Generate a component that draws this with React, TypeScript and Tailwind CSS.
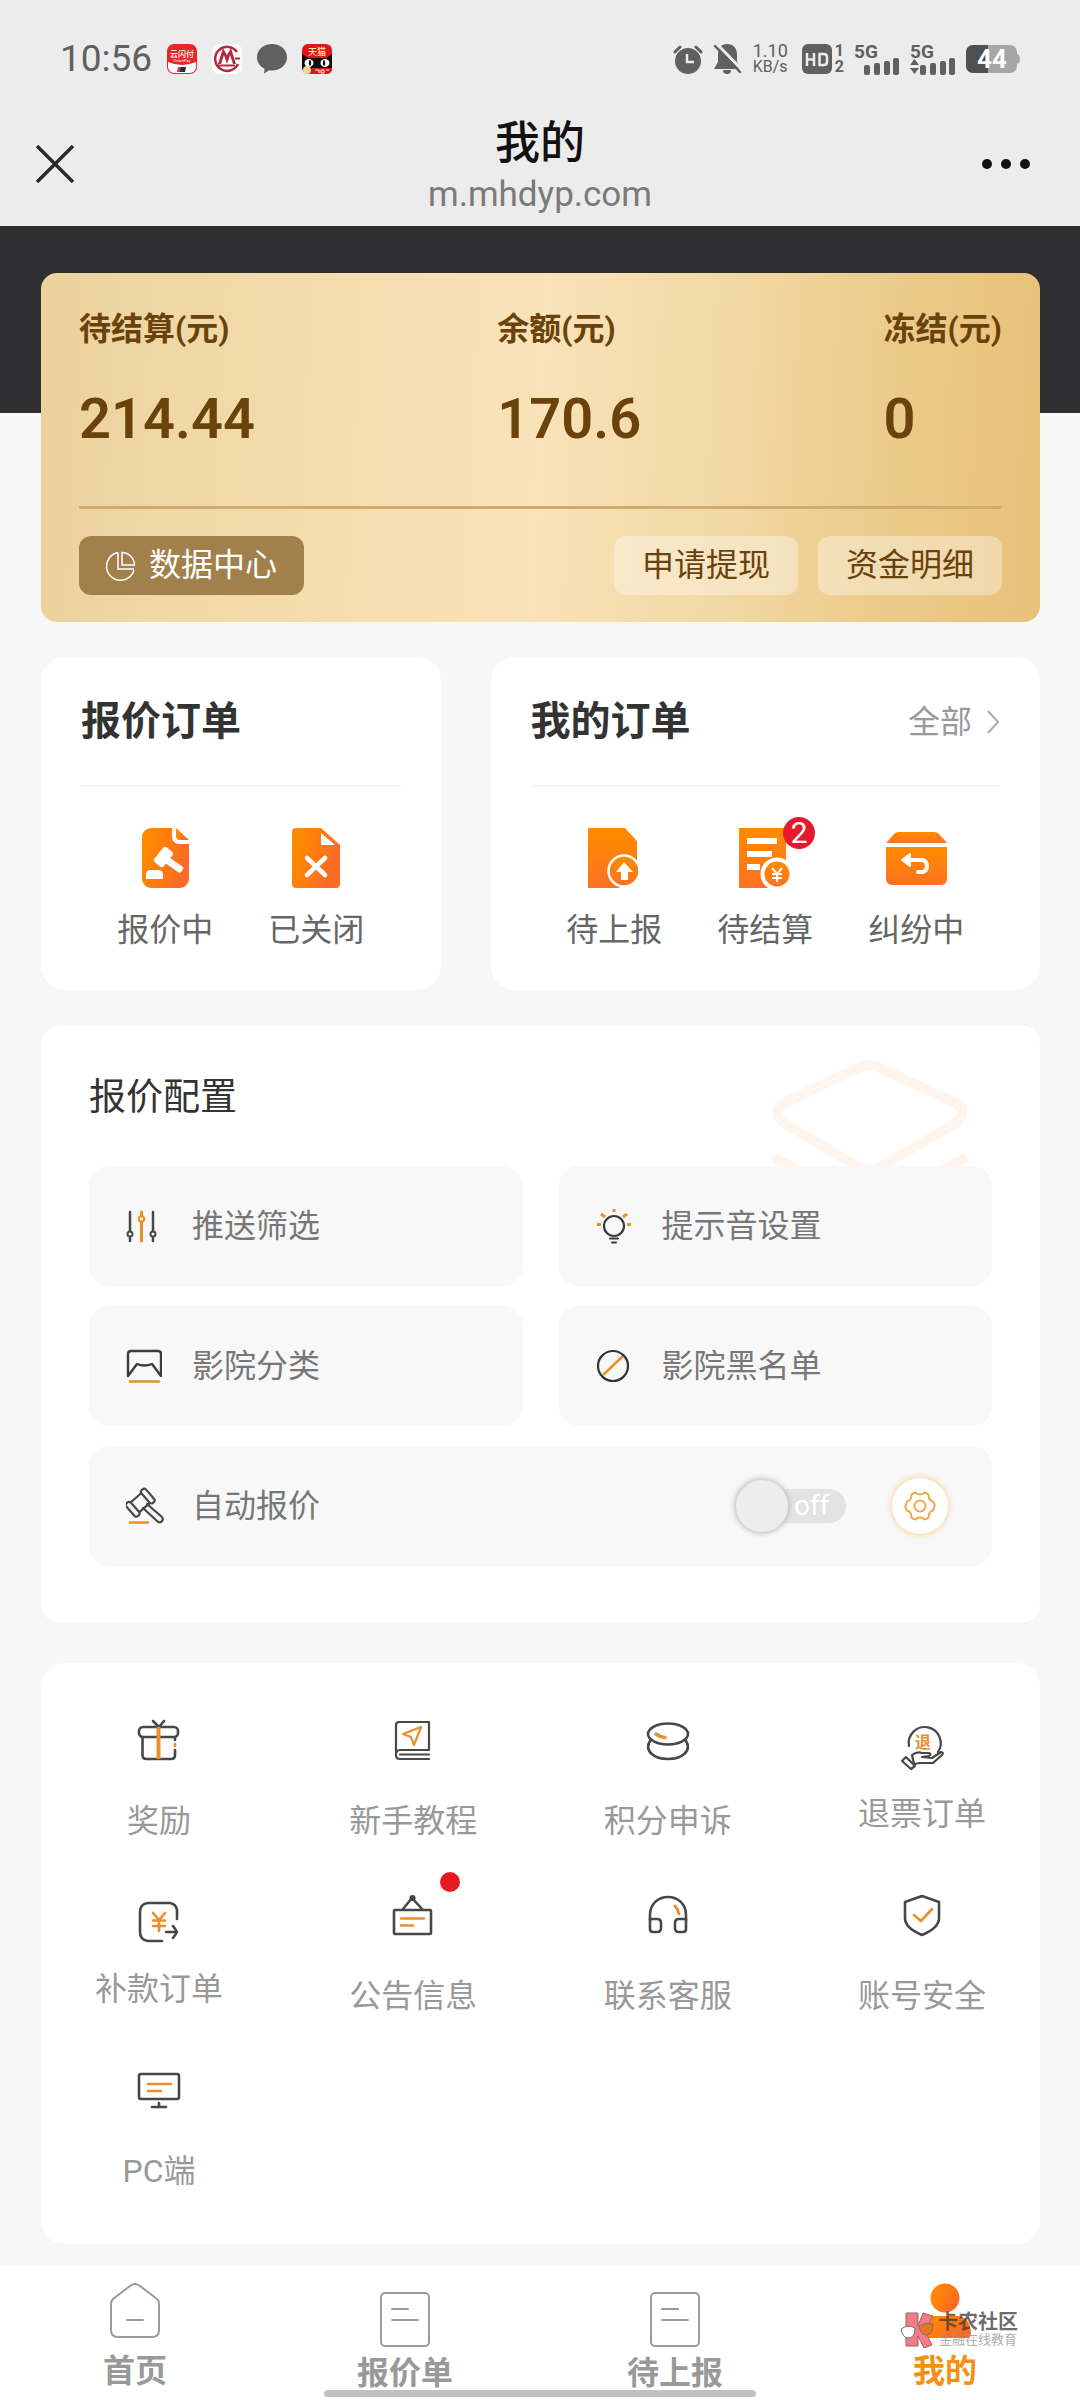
import React, { useState } from 'react';

const DARK = '#474747';
const ORANGE = '#e98f2c';

const Gradients = () => (
  <svg className="absolute h-0 w-0" aria-hidden="true">
    <defs>
      <linearGradient id="orangeX" x1="0" y1="0" x2="1" y2="0.4">
        <stop offset="0.2" stopColor="#ff8a00" />
        <stop offset="1" stopColor="#fb6a26" />
      </linearGradient>
      <linearGradient id="orangeY" x1="0" y1="0" x2="0" y2="1">
        <stop offset="0.1" stopColor="#ff8a00" />
        <stop offset="1" stopColor="#ff7024" />
      </linearGradient>
    </defs>
  </svg>
);

/* ---------- status bar ---------- */

const UnionPayIcon = () => (
  <svg width="30" height="30" viewBox="0 0 30 30">
    <rect width="30" height="30" rx="7" fill="#e8262a" />
    <path d="M1 18Q15 24 29 18V23a6 6 0 0 1-6 6H7a6 6 0 0 1-6-6Z" fill="#fff" />
    <text x="15" y="13" textAnchor="middle" fontSize="8" fontWeight="500" fill="#fff">云闪付</text>
    <text x="15" y="18" textAnchor="middle" fontSize="4" fill="#fff">UnionPay</text>
    <path d="M12 23h7l-1 5h-7z" fill="#12343f" />
    <path d="M11 23h3l-1 5h-3z" fill="#d8343a" />
  </svg>
);

const BankIcon = () => (
  <svg width="30" height="30" viewBox="0 0 30 30">
    <rect width="30" height="30" rx="7" fill="#fff" />
    <path d="M25 8A12 12 0 1 0 26 20" fill="none" stroke="#b02a43" strokeWidth="2.500" />
    <path d="M6 20 11 4l4 7 4-7 5 16h-3l-3-9-3 9-3-9-3 9Z" fill="#b02a43" />
    <path d="M6 21.500H23M23 14.500h5" stroke="#b02a43" strokeWidth="2" />
  </svg>
);

const BubbleIcon = () => (
  <svg width="30" height="30" viewBox="0 0 30 30">
    <path d="M15 0c8.500 0 15 5.800 15 13.300S23.500 26.500 15 26.500c-1 0-2 0-2.800-.3L7 29.500l.6-4.700C3 22.500 0 18.300 0 13.300 0 5.800 6.500 0 15 0Z" fill="#606060" />
  </svg>
);

const TmallIcon = () => (
  <svg width="30" height="30" viewBox="0 0 30 30">
    <rect width="30" height="30" rx="6" fill="#e0151c" />
    <path d="M0 10 6 14H24L30 10V25H0Z" fill="#0d0d0d" />
    <text x="15" y="11" textAnchor="middle" fontSize="9" fontWeight="500" fill="#ffe6a0">天猫</text>
    <ellipse cx="7" cy="19" rx="4.500" ry="4" fill="#fff" />
    <ellipse cx="23" cy="19" rx="4.500" ry="4" fill="#fff" />
    <ellipse cx="8" cy="19" rx="1.200" ry="3" fill="#0d0d0d" />
    <ellipse cx="22" cy="19" rx="1.200" ry="3" fill="#0d0d0d" />
    <path d="M10 24H30V25a5 5 0 0 1-5 5H10Z" fill="#e0151c" />
    <circle cx="5" cy="26" r="4" fill="#ffd0a0" />
    <path d="M13 26h4v3M19 26h3v3h-3zM24 26h3" stroke="#fff" fill="none" />
  </svg>
);

const AlarmIcon = () => (
  <svg width="30" height="30" viewBox="0 0 30 30">
    <circle cx="15" cy="17" r="13" fill="#606060" />
    <path d="M2 8 7 3M28 8 23 3" stroke="#606060" strokeWidth="3" strokeLinecap="round" />
    <path d="M14 10v8h7" fill="none" stroke="#ececec" strokeWidth="2.500" />
  </svg>
);

const BellOffIcon = () => (
  <svg width="30" height="30" viewBox="0 0 30 30">
    <path d="M14 0c6 0 10 4 10 10v8l4 7H1l4-7v-8C5 4 8 0 14 0ZM10 26h8a4 4 0 0 1-8 0Z" fill="#606060" />
    <path d="M4 0 30 27" stroke="#ececec" strokeWidth="3" />
    <path d="M2 2 27 28" stroke="#606060" strokeWidth="2.500" strokeLinecap="round" />
  </svg>
);

const HdIcon = () => (
  <span className="flex items-center gap-[3px] text-[16px] leading-4 font-bold">
    <svg width="30" height="30" viewBox="0 0 30 30">
      <rect width="30" height="30" rx="6" fill="#606060" />
      <path d="M5 9v13M12 9v13M5 15.500h7" stroke="#ececec" strokeWidth="2.500" fill="none" />
      <path d="M17.500 10h4q3.500 0 3.500 3v5q0 3-3.500 3h-4Z" stroke="#ececec" strokeWidth="2.500" fill="none" />
    </svg>
    <span className="flex flex-col items-center">
      <span>1</span>
      <span>2</span>
    </span>
  </span>
);

const SignalIcon = ({ arrows }: { arrows?: boolean }) => (
  <svg className="overflow-visible" width="46" height="31" viewBox="0 0 46 31">
    <text x="0" y="14" fontSize="19" fontWeight="700" fill="#606060">5G</text>
    <rect x="10" y="21" width="6" height="10" rx="2" fill="#606060" />
    <rect x="20" y="19" width="6" height="12" rx="2" fill="#606060" />
    <rect x="30" y="17" width="6" height="14" rx="2" fill="#606060" />
    <rect x="39" y="14" width="6" height="17" rx="2" fill="#606060" />
    {arrows && <path d="M0 21 4.500 15 9 21ZM0 24H9L4.500 30Z" fill="#606060" />}
  </svg>
);

const BatteryIcon = () => (
  <svg className="overflow-visible" width="54" height="28" viewBox="0 0 54 28">
    <rect width="51" height="28" rx="7" fill="#a6a6a6" />
    <path d="M51 9q3 1 3 5t-3 5Z" fill="#a6a6a6" />
    <path d="M7 0H22V28H7a7 7 0 0 1-7-7V7a7 7 0 0 1 7-7Z" fill="#505050" />
    <text x="26" y="23" textAnchor="middle" fontSize="26" fontWeight="700" fill="#fff">44</text>
  </svg>
);

/* ---------- order icons ---------- */

const BiddingIcon = () => (
  <svg width="47" height="60" viewBox="0 0 47 60">
    <path d="M9 0H30V9a7 7 0 0 0 7 7H47V51a9 9 0 0 1-9 9H9a9 9 0 0 1-9-9V9A9 9 0 0 1 9 0Z" fill="url(#orangeX)" />
    <path d="M34 0 47 12H38a4 4 0 0 1-4-4Z" fill="url(#orangeX)" />
    <g fill="#fff">
      <rect x="-6" y="-9.500" width="12" height="19" rx="2.500" transform="translate(21.500 29) rotate(38)" />
      <rect x="0" y="-3.500" width="22" height="7" rx="2" transform="translate(22 30) rotate(35)" />
      <path d="M4 51V47q0-5 5-5h7q5 0 5 5v4Z" />
    </g>
  </svg>
);

const ClosedIcon = () => (
  <svg width="48" height="60" viewBox="0 0 48 60">
    <path d="M4 0H29L48 17V56a4 4 0 0 1-4 4H4a4 4 0 0 1-4-4V4A4 4 0 0 1 4 0Z" fill="url(#orangeX)" />
    <path d="M29 5V17H43Z" fill="#fff" />
    <path d="m15 30 18 17M33 30 15 47" stroke="#fff" strokeWidth="4.500" strokeLinecap="round" />
  </svg>
);

const UploadIcon = () => (
  <svg width="52" height="60" viewBox="0 0 52 60">
    <path d="M1 0H37L49 13V60H1a1 1 0 0 1-1-1V1A1 1 0 0 1 1 0Z" fill="url(#orangeY)" />
    <path d="M30 60 40 56H52V60ZM46 34H52V60H46Z" fill="#fff" />
    <circle cx="36" cy="43" r="15.500" fill="url(#orangeY)" stroke="#fff" strokeWidth="2.500" />
    <path d="M36 34 45 44H40V52H33V44H28Z" fill="#fff" />
  </svg>
);

const SettleIcon = () => (
  <svg width="52" height="60" viewBox="0 0 52 60">
    <path d="M1 0H47V60H1a1 1 0 0 1-1-1V1A1 1 0 0 1 1 0Z" fill="url(#orangeY)" />
    <path d="M8 13H38M8 26H33M8 39H21" stroke="#fff" strokeWidth="6" />
    <path d="M29 60H52V42H44Z" fill="#fff" />
    <circle cx="38" cy="46" r="14.500" fill="url(#orangeY)" stroke="#fff" strokeWidth="4" />
    <path d="m33 40 5 6 5-6M38 46V54M33 46H43M33 50H43" stroke="#fff" strokeWidth="2" fill="none" />
  </svg>
);

const DisputeIcon = () => (
  <svg width="61" height="60" viewBox="0 0 61 60">
    <path d="M0 15 8 6Q10 4 13 4H48Q51 4 53 6L61 15Z" fill="url(#orangeY)" />
    <path d="M0 19H61V51a6 6 0 0 1-6 6H6a6 6 0 0 1-6-6Z" fill="url(#orangeY)" />
    <path d="M21 32H37a6.500 6.500 0 0 1 0 12H32" fill="none" stroke="#fff" strokeWidth="4" strokeLinecap="round" />
    <path d="M24 26 16 32 24 38Z" fill="#fff" stroke="#fff" strokeWidth="2" strokeLinejoin="round" />
  </svg>
);

/* ---------- config icons ---------- */

const FilterIcon = () => (
  <svg width="36" height="36" viewBox="0 0 36 36" fill="none" strokeWidth="2.500" strokeLinecap="round">
    <path d="M4 4V23M4 30V33M27 4V23M27 30V33" stroke={DARK} />
    <circle cx="4" cy="26" r="2.500" stroke={DARK} strokeWidth="2" />
    <circle cx="27" cy="26" r="2.500" stroke={DARK} strokeWidth="2" />
    <path d="M15.500 4V8M15.500 14V33" stroke={ORANGE} strokeWidth="3" />
    <circle cx="15.500" cy="11" r="2.800" stroke={ORANGE} strokeWidth="2" />
  </svg>
);

const BulbIcon = () => (
  <svg width="36" height="36" viewBox="0 0 36 36" fill="none" strokeWidth="2.500">
    <circle cx="18" cy="18" r="10" stroke="#3a3a3a" strokeWidth="2.200" />
    <path d="M14 30.500H22M16 34.500H20" stroke="#3a3a3a" strokeWidth="2" strokeLinecap="round" />
    <path d="M18 1V4M5 6 9 9M31 6 27 9M1 16.500H5M31 16.500H35" stroke={ORANGE} strokeWidth="3" />
  </svg>
);

const CinemaIcon = () => (
  <svg width="36" height="36" viewBox="0 0 36 36" fill="none" strokeWidth="2.400" strokeLinejoin="round" strokeLinecap="round">
    <path d="M2 28V6Q2 3 5 3H32Q35 3 35 6V28L26 16Q18.500 19 11 16Z" stroke="#3c3c3c" />
    <path d="M4 33.500H33" stroke={ORANGE} strokeWidth="2.500" />
  </svg>
);

const BlockIcon = () => (
  <svg width="36" height="36" viewBox="0 0 36 36" fill="none" strokeWidth="2.200">
    <path d="M7 27 27 8" stroke={ORANGE} strokeWidth="2.500" />
    <circle cx="17" cy="18" r="15" stroke="#333" />
  </svg>
);

const GavelIcon = () => (
  <svg width="38" height="38" viewBox="0 0 38 38" fill="none" strokeWidth="2.200" strokeLinejoin="round" stroke={DARK}>
    <g transform="translate(15 15) rotate(-41)">
      <rect x="-9" y="-6.500" width="16" height="13" />
      <rect x="-14" y="-8.500" width="6" height="17" rx="2.500" fill="#f8f8f8" />
      <rect x="6" y="-8.500" width="6" height="17" rx="2.500" fill="#f8f8f8" />
    </g>
    <path d="m21 17 15 13q2 3-1 5-2 1-4-1L17 21" strokeLinecap="round" />
    <path d="M4 35.500H22" stroke={ORANGE} strokeWidth="2.500" strokeLinecap="round" />
  </svg>
);

const GearIcon = () => (
  <svg width="32" height="32" viewBox="0 0 32 32" fill="none" stroke="#efa84a" strokeWidth="2" strokeLinejoin="round">
    <path d="M11.500 2.500Q13 4.500 16 4.500T20.500 2.500Q24 3 24.800 5.500 24.500 8 25.800 9.500T29 11.500Q31 14 30.500 16T29 20.500Q27 21 25.800 22.500T24.800 26.500Q24 29 20.500 29.500 19 27.500 16 27.500T11.500 29.500Q8 29 7.200 26.500 7.500 24 6.200 22.500T3 20.500Q1 18 1.500 16T3 11.500Q5 11 6.200 9.500T7.200 5.500Q8 3 11.500 2.500Z" />
    <circle cx="16" cy="16" r="5.500" />
  </svg>
);

/* ---------- tool icons ---------- */

const toolProps = {
  width: 44,
  height: 44,
  viewBox: '0 0 44 44',
  fill: 'none',
  stroke: DARK,
  strokeWidth: 2.6,
  strokeLinecap: 'round' as const,
  strokeLinejoin: 'round' as const,
};

const GiftIcon = () => (
  <svg {...toolProps}>
    <rect x="2" y="8" width="39" height="10" rx="4" />
    <path d="M5.500 18V36q0 4 4 4H34q4 0 4-4V31M38 18v3M16 2l6 6 5-6" />
    <path d="M38 25v2" stroke={ORANGE} />
    <path d="M21.500 8V40" stroke={ORANGE} strokeWidth="4" strokeLinecap="butt" />
  </svg>
);

const BookIcon = () => (
  <svg {...toolProps} strokeWidth="2.200">
    <path d="M38 31V3H8Q5 3 5 6V36Q5 40 9 40H38M38 31H9Q5 31 5 36M9 35.500H38" />
    <path d="M30 8 23 26 20 18 12 15Z" stroke={ORANGE} />
  </svg>
);

const CoinsIcon = () => (
  <svg {...toolProps}>
    <ellipse cx="22" cy="15" rx="20" ry="10.500" />
    <path d="M4 22C-2 32 8 40 22 40S46 32 40 22" />
    <path d="M10 15q4 3 9 3.500" stroke={ORANGE} strokeWidth="3.500" />
  </svg>
);

const RefundIcon = () => (
  <svg {...toolProps} className="overflow-visible" strokeWidth="2.200">
    <path d="M9 20A16 16 0 1 1 38 26" />
    <path d="M12 29q5-4 10-2h7q3 1 0 3l-7 1 10 1 9-6q3 0 1 3L33 37H20l-6 1Z" />
    <path d="m6 31 9 9-4 3-9-8Z" />
    <text x="23" y="22" textAnchor="middle" fontSize="16" fontWeight="700" fill={ORANGE} stroke="none">退</text>
  </svg>
);

const PayIcon = () => (
  <svg {...toolProps}>
    <path d="M40 18V9q-1-6-7-7H11Q3 3 3 11V31q0 8 8 9H25" />
    <path d="M29 31H40M36 25q3 4 4 6-1 2-4 6" />
    <path d="m16 12 6 7 6-7M22 19V30M16 19.500H28M16 25H28" stroke={ORANGE} />
  </svg>
);

const NoticeIcon = () => (
  <svg {...toolProps}>
    <rect x="3" y="16" width="37" height="24" rx="1" />
    <path d="m12 15 9-11 10 11" />
    <circle cx="21.500" cy="4" r="1.800" fill={DARK} />
    <path d="M10 24.500H33M10 31.500H22" stroke={ORANGE} strokeWidth="2.500" />
  </svg>
);

const HeadsetIcon = () => (
  <svg {...toolProps}>
    <path d="M4 26V21C4 10 12 3 22 3S40 10 40 21V26" />
    <path d="M4 25H11q4 0 4 4v5q0 4-4 4H7q-3 0-3-3ZM40 25H33q-4 0-4 4v5q0 4 4 4h4q3 0 3-3Z" />
    <path d="M29 12q3 3 4 8" stroke={ORANGE} strokeWidth="3" />
  </svg>
);

const ShieldIcon = () => (
  <svg {...toolProps}>
    <path d="M22 2 39 8V24Q39 34 22 41 5 34 5 24V8Z" />
    <path d="m14 21 7 6 11-12" stroke={ORANGE} />
  </svg>
);

const MonitorIcon = () => (
  <svg {...toolProps}>
    <rect x="2" y="5" width="40" height="25" rx="2" />
    <path d="M15 38H29M22 34V38" />
    <path d="M11 15H34M11 22H24" stroke={ORANGE} strokeWidth="2.500" />
  </svg>
);

/* ---------- tab bar icons ---------- */

const HomeIcon = () => (
  <svg width="50" height="56" viewBox="0 0 50 56" fill="none" stroke="#9a9a9a" strokeWidth="2">
    <path d="M20 3q5-4 10 0L47 16q2 2 2 5V47q0 7-7 7H8q-7 0-7-7V21q0-3 2-5Z" />
    <path d="M17 37H33" strokeLinecap="round" />
  </svg>
);

const ListIcon = () => (
  <svg width="50" height="56" viewBox="0 0 50 56" fill="none" stroke="#9a9a9a" strokeWidth="2">
    <rect x="1" y="2" width="48" height="53" rx="4" />
    <path d="M12 18H28M12 29H38" strokeLinecap="round" />
  </svg>
);

const MineIcon = () => (
  <svg width="54" height="56" viewBox="0 0 54 56">
    <circle cx="27" cy="15" r="14.500" fill="url(#orangeX)" />
    <path d="M14 33H40Q52 34 53 50q0 5-4 5H5q-4 0-4-5Q2 34 14 33Z" fill="url(#orangeX)" />
  </svg>
);

const Watermark = () => (
  <div className="pointer-events-none absolute top-[47px] left-[90px] flex items-center gap-1">
    <svg width="34" height="36" viewBox="0 0 34 36" stroke="#8a6a6a">
      <path d="M6 1H18V14L23 1 33 4 25 19 32 33 24 36 18 24V34H6Z" fill="#f27c88" />
      <path d="M1 17Q8 12 15 16 15 26 8 26 2 25 1 17Z" fill="#fff" />
      <path d="M19 14Q26 10 33 12 33 23 26 23 20 22 19 14Z" fill="#e07a1c" />
    </svg>
    <span className="flex flex-col whitespace-nowrap">
      <span className="text-[20px] leading-[20px] font-bold text-[#3c3c3c]/75">卡农社区</span>
      <span className="text-[13px] leading-[16px] text-[#8f8f8f]/75">金融在线教育</span>
    </span>
  </div>
);

const balances = [
  { label: '待结算(元)', value: '214.44' },
  { label: '余额(元)', value: '170.6' },
  { label: '冻结(元)', value: '0' },
];

const quoteOrders = [
  { label: '报价中', Icon: BiddingIcon },
  { label: '已关闭', Icon: ClosedIcon },
];

const myOrders = [
  { label: '待上报', Icon: UploadIcon },
  { label: '待结算', Icon: SettleIcon, badge: 2 },
  { label: '纠纷中', Icon: DisputeIcon },
];

const configs = [
  { label: '推送筛选', Icon: FilterIcon },
  { label: '提示音设置', Icon: BulbIcon },
  { label: '影院分类', Icon: CinemaIcon },
  { label: '影院黑名单', Icon: BlockIcon },
];

const tools = [
  { label: '奖励', Icon: GiftIcon },
  { label: '新手教程', Icon: BookIcon },
  { label: '积分申诉', Icon: CoinsIcon },
  { label: '退票订单', Icon: RefundIcon, compact: true },
  { label: '补款订单', Icon: PayIcon, compact: true },
  { label: '公告信息', Icon: NoticeIcon, dot: true },
  { label: '联系客服', Icon: HeadsetIcon },
  { label: '账号安全', Icon: ShieldIcon },
  { label: 'PC端', Icon: MonitorIcon },
];

type Order = { label: string; Icon: React.FC; badge?: number };

const OrderRow = ({ items }: { items: Order[] }) => (
  <div className="flex justify-center pt-[41px]">
    {items.map(({ label, Icon, badge }) => (
      <button key={label} className="flex w-[151px] flex-col items-center gap-[18px]">
        <span className="relative">
          <Icon />
          {badge && (
            <span className="absolute -top-[11px] left-[44px] flex h-8 w-8 items-center justify-center rounded-full bg-[#e6192c] text-[30px] leading-8 text-white">
              {badge}
            </span>
          )}
        </span>
        <span className="text-[32px] leading-[48px] text-[#666]">{label}</span>
      </button>
    ))}
  </div>
);

function App() {
  const [autoQuote, setAutoQuote] = useState(false);
  const [activeTab, setActiveTab] = useState('我的');

  const tabs = [
    { label: '首页', icon: <HomeIcon />, offset: 'pt-[18px]' },
    { label: '报价单', icon: <ListIcon />, offset: 'pt-[26px]' },
    { label: '待上报', icon: <ListIcon />, offset: 'pt-[26px]' },
    { label: '我的', icon: <MineIcon />, offset: 'pt-[18px]' },
  ];

  return (
    <div className="flex min-h-screen flex-col bg-[#f7f7f7] font-['Roboto','Noto_Sans_CJK_SC',sans-serif]">
      <Gradients />

      <header className="bg-[#ececec] pb-[10px]">
        <div className="flex items-center justify-between pt-[43px] pr-[60px] pl-[60px] text-[#606060]">
          <div className="flex items-center gap-[15px]">
            <span className="text-[37px] leading-8">10:56</span>
            <UnionPayIcon />
            <BankIcon />
            <BubbleIcon />
            <TmallIcon />
          </div>
          <div className="flex items-center">
            <div className="flex items-center gap-[10px]">
              <AlarmIcon />
              <BellOffIcon />
            </div>
            <div className="ml-[10px] flex flex-col text-[18px] leading-[16px]">
              <span>1.10</span>
              <span className="text-[16px]">KB/s</span>
            </div>
            <div className="ml-[14px] flex items-center gap-[10px]">
              <HdIcon />
              <SignalIcon />
              <SignalIcon arrows />
              <BatteryIcon />
            </div>
          </div>
        </div>

        <div className="flex items-center justify-between pt-[36px] pr-[50px] pl-9">
          <button aria-label="关闭" className="flex w-[74px] justify-start">
            <svg width="38" height="38" viewBox="0 0 38 38" stroke="#2a2a2a" strokeWidth="3.500">
              <path d="M1 1 37 37M37 1 1 37" />
            </svg>
          </button>
          <div className="flex flex-col items-center pt-1">
            <h1 className="text-[45px] leading-[58px] font-medium text-[#111]">我的</h1>
            <p className="text-[35px] leading-[43px] text-[#7a7a7a]">m.mhdyp.com</p>
          </div>
          <button aria-label="更多" className="flex w-[60px] justify-end">
            <svg width="48" height="10" viewBox="0 0 48 10" fill="#111">
              <circle cx="5" cy="5" r="5" />
              <circle cx="24" cy="5" r="5" />
              <circle cx="43" cy="5" r="5" />
            </svg>
          </button>
        </div>
      </header>

      <main className="flex flex-1 flex-col bg-[linear-gradient(#2f2f31_187px,#f7f7f7_187px)] pt-[47px] pr-10 pb-5 pl-[41px]">
        <section className="rounded-2xl bg-[linear-gradient(93deg,#ecd19c_0%,#f3dcac_25%,#f8e2b8_50%,#f2d8a4_68%,#ebca88_86%,#e8c17a_100%)] px-[38px] pt-[32px] pb-[27px] text-[#6a420c]">
          <div className="flex justify-between">
            {balances.map((item) => (
              <div key={item.label}>
                <p className="text-[32px] leading-[48px] font-bold">{item.label}</p>
                <p className="pt-[28px] text-[56px] leading-[76px] font-semibold">{item.value}</p>
              </div>
            ))}
          </div>
          <div className="mt-[49px] h-[3px] bg-[#cfab6f]" />
          <div className="flex items-center gap-5 pt-[27px] text-[32px] leading-[59px]">
            <button className="mr-auto flex items-center gap-[13px] rounded-xl bg-[#a2804c] px-[27px] text-white">
              <svg width="30" height="30" viewBox="0 0 30 30" fill="none" stroke="#fff" strokeWidth="1.500">
                <path d="M12 1.500A14 14 0 1 0 28 19" />
                <path d="M16 1.500V14H28.500A13 13 0 0 0 16 1.500ZM12 1.500V18H28" />
              </svg>
              数据中心
            </button>
            <button className="rounded-xl bg-white/35 px-7">申请提现</button>
            <button className="rounded-xl bg-white/35 px-7">资金明细</button>
          </div>
        </section>

        <div className="mt-[35px] grid grid-cols-[8fr_11fr] gap-[50px]">
          <section className="rounded-3xl bg-white px-10 pb-9">
            <h2 className="border-b-2 border-[#f5f5f5] pt-[37px] pb-[35px] text-[40px] leading-[56px] font-bold text-[#333]">报价订单</h2>
            <OrderRow items={quoteOrders} />
          </section>
          <section className="rounded-3xl bg-white px-10 pb-9">
            <div className="flex items-center justify-between border-b-2 border-[#f5f5f5] pt-[37px] pb-[35px]">
              <h2 className="text-[40px] leading-[56px] font-bold text-[#333]">我的订单</h2>
              <a href="#orders" className="flex items-center gap-[14px] text-[32px] leading-[48px] text-[#999]">
                全部
                <svg width="14" height="24" viewBox="0 0 14 24" fill="none" stroke="#aaa" strokeWidth="2">
                  <path d="M2 1 12 12 2 23" />
                </svg>
              </a>
            </div>
            <OrderRow items={myOrders} />
          </section>
        </div>

        <section className="relative mt-[35px] rounded-[20px] bg-white px-12 pt-[47px] pb-[57px]">
          <svg className="absolute top-[34px] right-[70px]" width="200" height="108" viewBox="0 0 200 108" fill="none" stroke="#fff5ed" strokeWidth="10" strokeLinecap="round">
            <path d="M88 9Q99 3 110 9L186 44Q199 52 186 64L110 108Q99 114 88 108L14 64Q1 52 14 44ZM7 100 36 116M193 100 164 116" />
          </svg>
          <h2 className="text-[37px] leading-[52px] text-[#333]">报价配置</h2>
          <div className="relative grid grid-cols-2 gap-x-9 gap-y-5 pt-[42px] text-[32px] leading-[48px] text-[#777]">
            {configs.map(({ label, Icon }) => (
              <button key={label} className="flex items-center gap-[30px] rounded-[20px] bg-[#f8f8f8] py-9 pl-[37px]">
                <Icon />
                {label}
              </button>
            ))}
            <div className="col-span-2 flex items-center gap-7 rounded-[20px] bg-[#f8f8f8] py-8 pr-[44px] pl-[37px]">
              <GavelIcon />
              <label htmlFor="auto-quote">自动报价</label>
              <div className="relative mr-[18px] ml-auto flex h-14 w-[110px] items-center">
                <input
                  id="auto-quote"
                  type="checkbox"
                  role="switch"
                  checked={autoQuote}
                  onChange={(e) => setAutoQuote(e.target.checked)}
                  className="absolute inset-0 z-10 h-full w-full cursor-pointer opacity-0"
                />
                <span className="z-[1] h-[52px] w-[52px] rounded-full bg-[#ededed] shadow-[0_0_5px_2px_#c4c4c4]" />
                <span className="-ml-5 flex-1 rounded-r-full bg-[#e3e3e3] pl-[26px] text-[28px] leading-[34px] text-white">
                  {autoQuote ? 'on' : 'off'}
                </span>
              </div>
              <button aria-label="自动报价设置" className="flex h-14 w-14 items-center justify-center rounded-full bg-white shadow-[0_0_5px_2px_#fbdcb4]">
                <GearIcon />
              </button>
            </div>
          </div>
        </section>

        <section className="mt-10 grid grid-cols-[repeat(4,128px)] justify-between gap-y-[49px] rounded-3xl bg-white px-[54px] pt-[56px] pb-[49px]">
          {tools.map(({ label, Icon, compact, dot }) => (
            <button key={label} className={compact ? 'flex flex-col items-center gap-5 pt-[7px]' : 'flex flex-col items-center gap-[34px]'}>
              <span className="relative">
                <Icon />
                {dot && <span className="absolute -top-[22px] left-[49px] h-5 w-5 rounded-full bg-[#e8191f]" />}
              </span>
              <span className="text-[32px] leading-[48px] whitespace-nowrap text-[#999]">{label}</span>
            </button>
          ))}
        </section>
      </main>

      <nav className="sticky bottom-0 z-20 grid h-[135px] grid-cols-4 bg-white">
        {tabs.map((tab) => (
          <button key={tab.label} onClick={() => setActiveTab(tab.label)} className={`relative flex flex-col items-center ${tab.offset}`}>
            {tab.icon}
            <span className={`text-[32px] leading-[52px] font-bold ${activeTab === tab.label ? 'text-[#f78f14]' : 'text-[#999]'} ${tab.offset === 'pt-[18px]' ? 'pt-[6px]' : ''}`}>
              {tab.label}
            </span>
            {tab.label === '我的' && <Watermark />}
          </button>
        ))}
        <div className="absolute bottom-[3px] left-1/2 h-[7px] w-2/5 -translate-x-1/2 rounded-full bg-[#c1c1c1]" />
      </nav>
    </div>
  );
}

export default App;
